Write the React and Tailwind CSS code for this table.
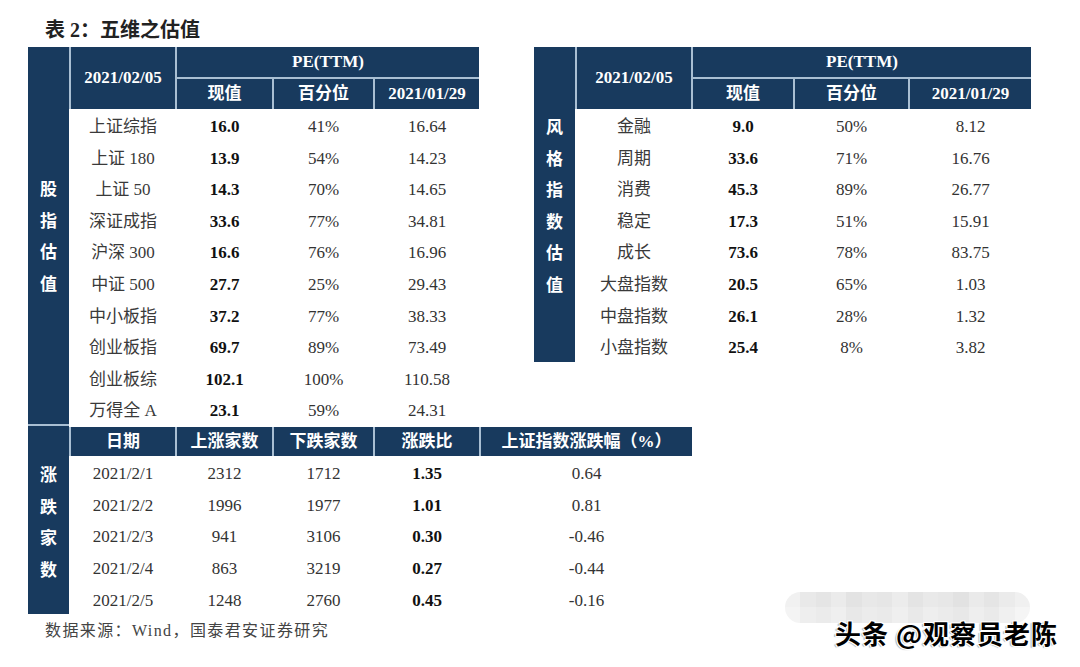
import React from "react";

const leftRows = [
  ["上证综指", "16.0", "41%", "16.64"],
  ["上证 180", "13.9", "54%", "14.23"],
  ["上证 50", "14.3", "70%", "14.65"],
  ["深证成指", "33.6", "77%", "34.81"],
  ["沪深 300", "16.6", "76%", "16.96"],
  ["中证 500", "27.7", "25%", "29.43"],
  ["中小板指", "37.2", "77%", "38.33"],
  ["创业板指", "69.7", "89%", "73.49"],
  ["创业板综", "102.1", "100%", "110.58"],
  ["万得全 A", "23.1", "59%", "24.31"],
];

const rightRows = [
  ["金融", "9.0", "50%", "8.12"],
  ["周期", "33.6", "71%", "16.76"],
  ["消费", "45.3", "89%", "26.77"],
  ["稳定", "17.3", "51%", "15.91"],
  ["成长", "73.6", "78%", "83.75"],
  ["大盘指数", "20.5", "65%", "1.03"],
  ["中盘指数", "26.1", "28%", "1.32"],
  ["小盘指数", "25.4", "8%", "3.82"],
];

const bottomRows = [
  ["2021/2/1", "2312", "1712", "1.35", "0.64"],
  ["2021/2/2", "1996", "1977", "1.01", "0.81"],
  ["2021/2/3", "941", "3106", "0.30", "-0.46"],
  ["2021/2/4", "863", "3219", "0.27", "-0.44"],
  ["2021/2/5", "1248", "2760", "0.45", "-0.16"],
];

const mosaic = [
  "bg-[#f1f1f1]", "bg-[#e9e9e9]", "bg-[#e5e5e5]", "bg-[#ebebeb]", "bg-[#e3e3e3]", "bg-[#e8e8e8]",
  "bg-[#e6e6e6]", "bg-[#ececec]", "bg-[#e4e4e4]", "bg-[#e9e9e9]", "bg-[#e7e7e7]", "bg-[#e2e2e2]",
  "bg-[#eaeaea]", "bg-[#e5e5e5]", "bg-[#ebebeb]", "bg-[#f0f0f0]",
];
const mosaic2 = [
  "bg-[#f4f4f4]", "bg-[#eeeeee]", "bg-[#ebebeb]", "bg-[#efefef]", "bg-[#e8e8e8]", "bg-[#ececec]",
  "bg-[#eaeaea]", "bg-[#efefef]", "bg-[#e9e9e9]", "bg-[#eeeeee]", "bg-[#ebebeb]", "bg-[#e8e8e8]",
  "bg-[#eeeeee]", "bg-[#eaeaea]", "bg-[#f0f0f0]", "bg-[#f5f5f5]",
];

function Side({ chars, className }) {
  return (
    <div className={`w-[41px] shrink-0 bg-[#183a5e] flex flex-col items-center text-white font-bold text-[17px] ${className}`}>
      {chars.split("").map((c, i) => (
        <div key={i} className="h-[31.6px] flex items-center justify-center font-['Noto_Sans_CJK_SC',sans-serif]">
          {c}
        </div>
      ))}
    </div>
  );
}

function PEHeader({ cols }) {
  return (
    <div className="pl-[2px] bg-[#a9bfd3]">
      <div className={`grid ${cols} grid-rows-[30px_30px] gap-[2px] text-white font-bold text-[17px]`}>
        <div className="row-span-2 bg-[#183a5e] flex items-center justify-center">2021/02/05</div>
        <div className="col-span-3 bg-[#183a5e] flex items-center justify-center">PE(TTM)</div>
        <div className="bg-[#183a5e] flex items-center justify-center">现值</div>
        <div className="bg-[#183a5e] flex items-center justify-center">百分位</div>
        <div className="bg-[#183a5e] flex items-center justify-center">2021/01/29</div>
      </div>
    </div>
  );
}

function PERows({ cols, rows }) {
  return (
    <div className="pl-[2px] pt-[2px]">
      {rows.map((r, i) => (
        <div key={i} className={`grid ${cols} gap-x-[2px] h-[31.6px] items-center text-[17px] text-[#333]`}>
          <div className="text-center text-[#3a3a3a]">{r[0]}</div>
          <div className="text-center font-bold text-[#111]">{r[1]}</div>
          <div className="text-center">{r[2]}</div>
          <div className="text-center">{r[3]}</div>
        </div>
      ))}
    </div>
  );
}

export default function App() {
  return (
    <div className="w-[1080px] h-[667px] bg-white relative overflow-hidden font-['Liberation_Serif','Noto_Sans_CJK_SC',serif] text-[#333]">
      <div className="h-[47px] pl-[45px] pt-[18px] text-[20px] leading-[24px] font-bold text-[#222]">
        表 2：五维之估值
      </div>

      <div className="flex items-start pl-[28px] gap-[55px] h-[377px]">
        {/* left top table */}
        <div className="flex h-[377px] w-[451px]">
          <Side chars="股指估值" className="h-[377px] pt-[125px]" />
          <div className="w-[410px]">
            <PEHeader cols="grid-cols-[104px_95px_99px_104px]" />
            <PERows cols="grid-cols-[104px_95px_99px_104px]" rows={leftRows} />
          </div>
        </div>

        {/* right table */}
        <div className="flex h-[315px] w-[497px]">
          <Side chars="风格指数估值" className="h-[315px] pt-[63px]" />
          <div className="w-[456px]">
            <PEHeader cols="grid-cols-[114px_100px_113px_121px]" />
            <PERows cols="grid-cols-[114px_100px_113px_121px]" rows={rightRows} />
          </div>
        </div>
      </div>

      {/* bottom table */}
      <div className="flex pl-[28px] h-[192px] items-start">
        <div className="w-[41px] h-[190px] border-t-2 border-[#a9bfd3]">
          <Side chars="涨跌家数" className="h-full pt-[32px]" />
        </div>
        <div className="pt-[3px]">
          <div className="pl-[2px] bg-[#a9bfd3]">
            <div className="grid grid-cols-[104px_95px_99px_104px_211px] h-[29px] gap-x-[2px] text-white font-bold text-[17px]">
              <div className="bg-[#183a5e] flex items-center justify-center">日期</div>
              <div className="bg-[#183a5e] flex items-center justify-center">上涨家数</div>
              <div className="bg-[#183a5e] flex items-center justify-center">下跌家数</div>
              <div className="bg-[#183a5e] flex items-center justify-center">涨跌比</div>
              <div className="bg-[#183a5e] flex items-center justify-center">上证指数涨跌幅（%）</div>
            </div>
          </div>
          <div className="pl-[2px] pt-[2px]">
            {bottomRows.map((r, i) => (
              <div key={i} className="grid grid-cols-[104px_95px_99px_104px_211px] gap-x-[2px] h-[31.7px] items-center text-[17px] text-[#333]">
                <div className="text-center">{r[0]}</div>
                <div className="text-center">{r[1]}</div>
                <div className="text-center">{r[2]}</div>
                <div className="text-center font-bold text-[#111]">{r[3]}</div>
                <div className="text-center">{r[4]}</div>
              </div>
            ))}
          </div>
        </div>
      </div>

      <div className="pl-[45px] mt-[4px] text-[16px] leading-[22px] tracking-[1.4px] text-[#444]">
        数据来源：Wind，国泰君安证券研究
      </div>

      {/* blurred watermark area */}
      <div className="absolute left-[785px] top-[592px] w-[245px] h-[31px] rounded-full overflow-hidden flex flex-col">
        <div className="flex h-[15px]">
          {mosaic.map((c, i) => (
            <div key={i} className={`w-[16px] h-full ${c}`} />
          ))}
        </div>
        <div className="flex h-[16px]">
          {mosaic2.map((c, i) => (
            <div key={i} className={`w-[16px] h-full ${c}`} />
          ))}
        </div>
      </div>
      <div className="absolute left-[835px] top-[617px] text-[26px] leading-[32px] font-bold tracking-[1px] text-black font-['Noto_Sans_CJK_SC',sans-serif] [text-shadow:-1px_-1px_0_#fff,1px_-1px_0_#fff,-1px_1px_0_#fff,1px_1px_0_#fff,-2px_1px_1px_rgba(0,0,0,0.35)]">
        头条 @观察员老陈
      </div>
    </div>
  );
}
